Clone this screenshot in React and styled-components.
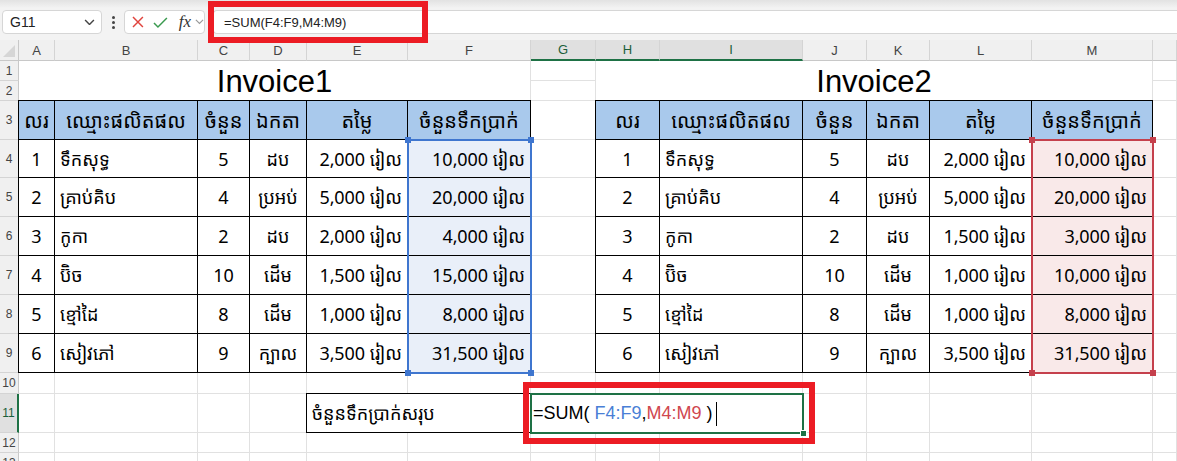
import styled, { createGlobalStyle, css } from "styled-components";

const KH = `"Noto Sans Khmer", "Khmer OS Battambang", "Khmer OS", "Liberation Sans", sans-serif`;

const GlobalStyle = createGlobalStyle`
  body {
    margin: 0;
    background: #fff;
    font-family: "Liberation Sans", Arial, sans-serif;
    overflow: hidden;
  }
`;

// N is only a sliver at the right edge, its letter is off screen
const COLS = [
  ["A", 36], ["B", 143], ["C", 52], ["D", 57], ["E", 101], ["F", 123], ["G", 65],
  ["H", 64], ["I", 143], ["J", 64], ["K", 63], ["L", 102], ["M", 121], ["", 24],
];
const ROWS = [20, 20, 39, 38, 39, 39, 39, 39, 39, 21, 39, 20, 20];
const ACTIVE_COLS = ["G", "H", "I"];
const ACTIVE_ROW = 11;

const HEAD = ["លរ", "ឈ្មោះផលិតផល", "ចំនួន", "ឯកតា", "តម្លៃ", "ចំនួនទឹកប្រាក់"];
const ALIGN = ["center", "flex-start", "center", "center", "flex-end", "flex-end"];
const R = "រៀល";

const invoice1 = [
  [1, "ទឹកសុទ្ធ", 5, "ដប", "2,000", "10,000"],
  [2, "គ្រាប់គិប", 4, "ប្រអប់", "5,000", "20,000"],
  [3, "កូកា", 2, "ដប", "2,000", "4,000"],
  [4, "ប៊ិច", 10, "ដើម", "1,500", "15,000"],
  [5, "ខ្មៅដៃ", 8, "ដើម", "1,000", "8,000"],
  [6, "សៀវភៅ", 9, "ក្បាល", "3,500", "31,500"],
];
const invoice2 = [
  [1, "ទឹកសុទ្ធ", 5, "ដប", "2,000", "10,000"],
  [2, "គ្រាប់គិប", 4, "ប្រអប់", "5,000", "20,000"],
  [3, "កូកា", 2, "ដប", "1,500", "3,000"],
  [4, "ប៊ិច", 10, "ដើម", "1,000", "10,000"],
  [5, "ខ្មៅដៃ", 8, "ដើម", "1,000", "8,000"],
  [6, "សៀវភៅ", 9, "ក្បាល", "3,500", "31,500"],
];

// col: 0-based index from A, row: sheet row number
const at = (col, row, cs = 1, rs = 1) => ({
  $c: `${col + 2} / span ${cs}`,
  $r: `${row + 1} / span ${rs}`,
});

const place = css`
  grid-column: ${(p) => p.$c};
  grid-row: ${(p) => p.$r};
`;

/* ---------- formula bar ---------- */

const Toolbar = styled.div`
  position: relative;
  z-index: 5;
  height: 40px;
  box-sizing: border-box;
  display: flex;
  align-items: flex-start;
  padding: 10px 0 0 2px;
  background: linear-gradient(#e2e2e2 0, #f3f3f3 8px, #f3f3f3 100%);
`;

const NameBox = styled.div`
  width: 100px;
  height: 24px;
  box-sizing: border-box;
  background: #fff;
  border: 1px solid #d6d6d6;
  border-radius: 4px;
  display: flex;
  align-items: center;
  justify-content: space-between;
  padding: 0 6px 0 7px;
  font-size: 14px;
  color: #222;
`;

const Dots = styled.div`
  width: 22px;
  height: 24px;
  display: flex;
  flex-direction: column;
  align-items: center;
  justify-content: center;
  gap: 2px;
  span {
    width: 3px;
    height: 3px;
    border-radius: 50%;
    background: #444;
  }
`;

const ActionBox = styled.div`
  width: 81px;
  height: 24px;
  box-sizing: border-box;
  background: #fff;
  border: 1px solid #d6d6d6;
  border-radius: 4px;
  display: flex;
  align-items: center;
  gap: 8px;
  padding-left: 6px;
  margin-right: 8px;
`;

const Fx = styled.span`
  font-family: "Liberation Serif", serif;
  font-style: italic;
  font-size: 17px;
  color: #333;
  margin-left: 3px;
  margin-right: -4px;
`;

const FormulaInput = styled.div`
  flex: 1;
  height: 24px;
  box-sizing: border-box;
  background: #fff;
  border: 1px solid #d6d6d6;
  border-right: none;
  border-radius: 4px 0 0 4px;
  display: flex;
  align-items: center;
  padding-left: 10px;
  font-size: 13px;
  color: #222;
`;

const Callout = styled.div`
  position: absolute;
  left: 208px;
  top: 1px;
  width: 220px;
  height: 42px;
  box-sizing: border-box;
  border: 6px solid #ec1c24;
  pointer-events: none;
`;

const Chevron = ({ size = 10, color = "#555" }) => (
  <svg width={size} height={size * 0.6} viewBox="0 0 10 6">
    <polyline points="1,1 5,5 9,1" fill="none" stroke={color} strokeWidth="1.3" />
  </svg>
);

/* ---------- sheet ---------- */

const Sheet = styled.div`
  display: grid;
  grid-template-columns: 19px ${COLS.map((c) => `${c[1]}px`).join(" ")};
  grid-template-rows: 21px ${ROWS.map((h) => `${h}px`).join(" ")};
  width: 1177px;
  background: #fff;
`;

const Corner = styled.div`
  grid-column: 1;
  grid-row: 1;
  background: #f0f0f0;
  border-right: 1px solid #c8c8c8;
  border-bottom: 1px solid #c8c8c8;
  position: relative;
  &::after {
    content: "";
    position: absolute;
    right: 3px;
    bottom: 3px;
    width: 12px;
    height: 12px;
    background: #d6d6d6;
    clip-path: polygon(100% 0, 100% 100%, 0 100%);
  }
`;

const ColHead = styled.div`
  ${place}
  background: ${(p) => (p.$active ? "#e0e0e0" : "#f0f0f0")};
  border-right: 1px solid #d4d4d4;
  border-bottom: ${(p) => (p.$active ? "2px solid #1e7145" : "1px solid #c8c8c8")};
  display: flex;
  align-items: center;
  justify-content: center;
  font-size: 13px;
  color: ${(p) => (p.$active ? "#1b5e3a" : "#444")};
`;

const RowHead = styled.div`
  grid-column: 1;
  grid-row: ${(p) => p.$r};
  background: ${(p) => (p.$active ? "#e0e0e0" : "#f0f0f0")};
  border-bottom: 1px solid #d4d4d4;
  border-right: ${(p) => (p.$active ? "2px solid #1e7145" : "1px solid #c8c8c8")};
  display: flex;
  align-items: center;
  justify-content: center;
  font-size: 12px;
  color: ${(p) => (p.$active ? "#1b5e3a" : "#444")};
`;

const GridCell = styled.div`
  ${place}
  border-right: 1px solid #e1e1e1;
  border-bottom: 1px solid #e1e1e1;
`;

const Title = styled.div`
  ${place}
  background: #fff;
  border-right: 1px solid #e1e1e1;
  display: flex;
  align-items: center;
  justify-content: center;
  padding-top: 2px;
  font-size: 31px;
  color: #000;
`;

const Cell = styled.div`
  ${place}
  box-sizing: border-box;
  background: ${(p) => (p.$head ? "#a9c9ec" : p.$fill || "#fff")};
  border-right: 1px solid #000;
  border-bottom: 1px solid #000;
  ${(p) =>
    p.$first &&
    css`
      border-left: 1px solid #000;
      margin-left: -1px;
    `}
  ${(p) =>
    p.$top &&
    css`
      border-top: 1px solid #000;
      margin-top: -1px;
    `}
  display: flex;
  align-items: center;
  justify-content: ${(p) => p.$align || "center"};
  padding: 0 5px;
  font-family: ${KH};
  font-size: ${(p) => (p.$head ? "20px" : "18px")};
  color: #000;
  white-space: nowrap;
  overflow: hidden;
`;

const Range = styled.div`
  ${place}
  position: relative;
  margin: -1px;
  border: 2px solid ${(p) => p.$color};
  pointer-events: none;
  z-index: 2;
`;

const Handle = styled.i`
  position: absolute;
  width: 6px;
  height: 6px;
  background: ${(p) => p.$color};
  ${(p) => (p.$y === "t" ? "top: -4px;" : "bottom: -4px;")}
  ${(p) => (p.$x === "l" ? "left: -4px;" : "right: -4px;")}
`;

const FormulaCell = styled.div`
  ${place}
  background: #fff;
  display: flex;
  align-items: center;
  padding-left: 2px;
  font-size: 18px;
  color: #000;
  white-space: nowrap;
`;

const Ref = styled.span`
  color: ${(p) => p.$color};
`;

const Caret = styled.span`
  display: inline-block;
  width: 1px;
  height: 24px;
  background: #000;
  margin-left: 3px;
`;

const ActiveBox = styled.div`
  ${place}
  position: relative;
  margin: -1px;
  border: 2px solid #1e7145;
  pointer-events: none;
  z-index: 2;
  &::after {
    content: "";
    position: absolute;
    right: -5px;
    bottom: -5px;
    width: 5px;
    height: 5px;
    background: #1e7145;
    border: 1px solid #fff;
  }
`;

const Annotation = styled.div`
  ${place}
  margin: -12px -12px -11px -8px;
  border: 6px solid #ec1c24;
  pointer-events: none;
  z-index: 3;
`;

function Invoice({ start, title, rows, fill, color }) {
  return (
    <>
      <Title {...at(start, 1, 6, 2)}>{title}</Title>
      {HEAD.map((h, i) => (
        <Cell key={h} {...at(start + i, 3)} $head $top $first={i === 0}>
          {h}
        </Cell>
      ))}
      {rows.map((r, ri) =>
        r.map((v, i) => (
          <Cell
            key={`${ri}-${i}`}
            {...at(start + i, ri + 4)}
            $first={i === 0}
            $align={ALIGN[i]}
            $fill={i === 5 ? fill : undefined}
          >
            {i >= 4 ? `${v} ${R}` : v}
          </Cell>
        ))
      )}
      <Range {...at(start + 5, 4, 1, 6)} $color={color}>
        <Handle $color={color} $y="t" $x="l" />
        <Handle $color={color} $y="t" $x="r" />
        <Handle $color={color} $y="b" $x="l" />
        <Handle $color={color} $y="b" $x="r" />
      </Range>
    </>
  );
}

export default function App() {
  return (
    <>
      <GlobalStyle />
      <Toolbar>
        <NameBox>
          G11
          <Chevron size={11} color="#444" />
        </NameBox>
        <Dots>
          <span />
          <span />
          <span />
        </Dots>
        <ActionBox>
          <svg width="14" height="14" viewBox="0 0 14 14">
            <path d="M2 2 L12 12 M12 2 L2 12" stroke="#e0443e" strokeWidth="1.5" fill="none" />
          </svg>
          <svg width="15" height="13" viewBox="0 0 15 13">
            <polyline points="1,7 5,11 14,2" stroke="#3a9a4f" strokeWidth="1.5" fill="none" />
          </svg>
          <Fx>fx</Fx>
          <Chevron size={9} color="#999" />
        </ActionBox>
        <FormulaInput>=SUM(F4:F9,M4:M9)</FormulaInput>
        <Callout />
      </Toolbar>

      <Sheet>
        <Corner />
        {COLS.map(([name], i) => (
          <ColHead key={i} $c={`${i + 2}`} $r="1" $active={ACTIVE_COLS.includes(name)}>
            {name}
          </ColHead>
        ))}
        {ROWS.map((_, ri) => (
          <RowHead key={ri} $r={`${ri + 2}`} $active={ri + 1 === ACTIVE_ROW}>
            {ri + 1}
          </RowHead>
        ))}
        {ROWS.map((_, ri) =>
          COLS.map((c, ci) => <GridCell key={`g${ri}-${ci}`} {...at(ci, ri + 1)} />)
        )}

        <Invoice start={0} title="Invoice1" rows={invoice1} fill="#e9eff9" color="#3f76cf" />
        <Invoice start={7} title="Invoice2" rows={invoice2} fill="#f9e9e9" color="#c5404c" />

        <Cell {...at(4, 11, 2)} $first $top $align="flex-start">
          ចំនួនទឹកប្រាក់សរុប
        </Cell>
        <FormulaCell {...at(6, 11, 3)}>
          =SUM(&nbsp;<Ref $color="#4a7fd6">F4:F9</Ref>,<Ref $color="#d0474f">M4:M9</Ref>&nbsp;)
          <Caret />
        </FormulaCell>
        <ActiveBox {...at(6, 11, 3)} />
        <Annotation {...at(6, 11, 3)} />
      </Sheet>
    </>
  );
}
